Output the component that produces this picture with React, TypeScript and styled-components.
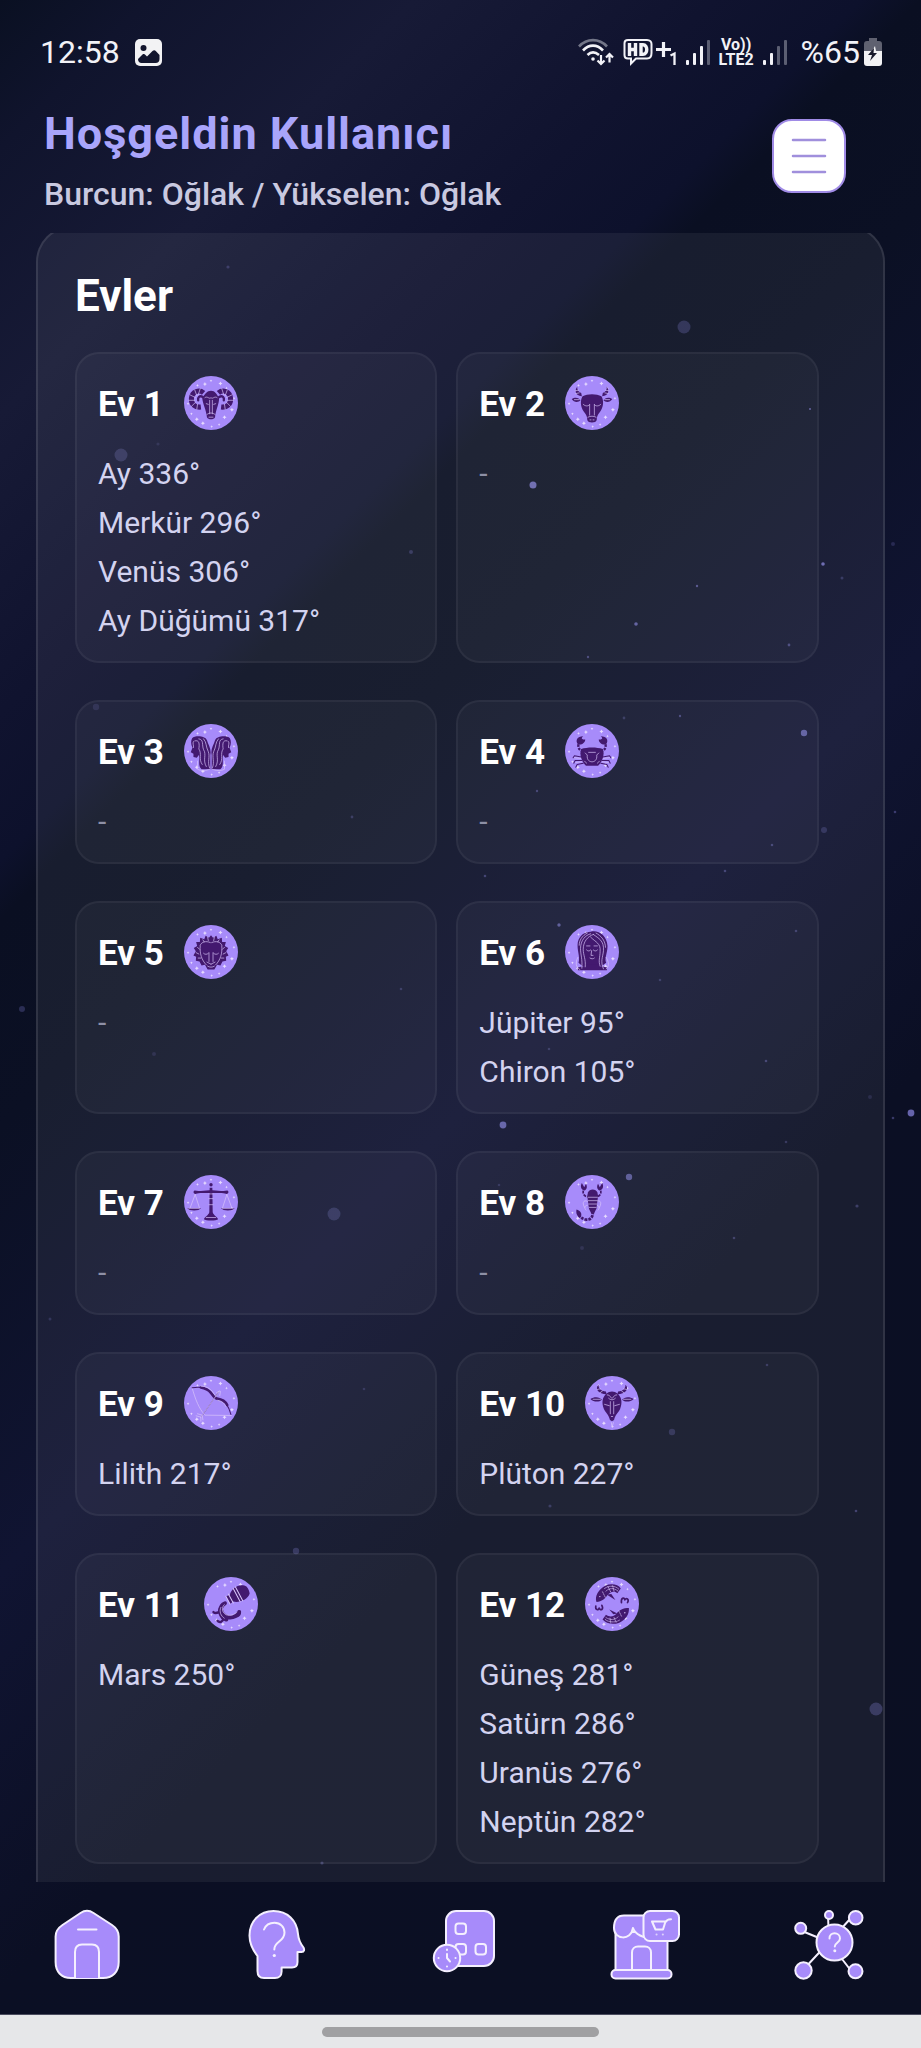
import React from "react";
import styled, { createGlobalStyle } from "styled-components";

const GlobalStyle = createGlobalStyle`
  *, *::before, *::after { box-sizing: border-box; }
  html, body { margin: 0; padding: 0; background: #0a0e20; }
  body { font-family: Roboto, "Noto Sans", sans-serif; color: #fff; }
  h1, h2, h3, p, ul { margin: 0; padding: 0; }
`;

const Page = styled.div`
  position: relative;
  display: flex;
  flex-direction: column;
  height: 100vh;
  overflow: hidden;
  background: linear-gradient(
    135deg,
    #0a1022 0%,
    #10142d 5%,
    #171a36 14%,
    #10132f 24%,
    #0d112c 29%,
    #0a0f22 31%,
    #0b1024 38%,
    #101432 53%,
    #0b0f24 67%,
    #0b0f22 100%
  );
`;

const Sky = styled.svg`
  position: absolute;
  inset: 0;
  width: 100%;
  height: 100%;
  pointer-events: none;
`;

const StatusBar = styled.div`
  position: relative;
  display: flex;
  align-items: center;
  justify-content: space-between;
  height: 104px;
  padding: 0 39px 0 40px;
  font-size: 32px;
  line-height: 40px;
  color: #f2f2f7;
`;

const StatusGroup = styled.div<{ $gap: number }>`
  display: flex;
  align-items: center;
  gap: ${(p) => p.$gap}px;
`;

const VoLte = styled.span`
  display: flex;
  flex-direction: column;
  align-items: center;
  font-size: 16px;
  line-height: 15px;
  font-weight: 700;
`;

const Battery = styled.span`
  display: flex;
  align-items: center;
  gap: 4px;
  padding-left: 5px;
`;

const Header = styled.header`
  position: relative;
  display: flex;
  align-items: flex-start;
  justify-content: space-between;
  height: 129px;
  padding: 2px 75px 0 44px;
`;

const Greeting = styled.h1`
  font-size: 45px;
  line-height: 56px;
  font-weight: 700;
  letter-spacing: 1px;
  color: #a9a5fb;
`;

const Signs = styled.p`
  margin-top: 12px;
  font-size: 32px;
  line-height: 40px;
  font-weight: 500;
  color: #c9c9e0;
`;

const MenuButton = styled.button`
  display: grid;
  place-items: center;
  width: 74px;
  height: 74px;
  margin-top: 13px;
  padding: 0;
  border: 2px solid #a08be6;
  border-radius: 20px;
  background: #fff;
`;

const Scroller = styled.main`
  position: relative;
  flex: 1;
  min-height: 0;
  overflow-y: auto;
  scrollbar-width: none;
  padding: 0 36px;
`;

const Panel = styled.section`
  margin-top: -7px;
  padding: 37px 37px 76px;
  border: 2px solid rgba(255, 255, 255, 0.1);
  border-radius: 36px;
  background: rgba(255, 255, 255, 0.06);
`;

const PanelTitle = styled.h2`
  font-size: 44px;
  line-height: 62px;
  font-weight: 700;
  margin-bottom: 25px;
`;

const HouseGrid = styled.div`
  display: grid;
  grid-template-columns: 47% 47%;
  gap: 37px 19px;
`;

const HouseCard = styled.article`
  padding: 22px 21px;
  border: 2px solid rgba(255, 255, 255, 0.05);
  border-radius: 24px;
  background: rgba(255, 255, 255, 0.03);
`;

const HouseHead = styled.div`
  display: flex;
  align-items: center;
  gap: 20px;
  height: 54px;
  margin-bottom: 26px;
`;

const HouseName = styled.h3`
  padding-top: 3px;
  font-size: 35px;
  line-height: 42px;
  font-weight: 700;
`;

const PlanetList = styled.ul`
  display: grid;
  gap: 13px;
  list-style: none;
  font-size: 30px;
  line-height: 36px;
  color: #d3d3f0;
`;

const Empty = styled.p`
  font-size: 30px;
  line-height: 36px;
  color: #8e90a6;
`;

const NavBar = styled.nav`
  position: relative;
  display: flex;
  justify-content: space-between;
  height: 132px;
  padding: 26px 55px 0 50px;
`;

const NavButton = styled.button`
  width: 74px;
  height: 74px;
  padding: 0;
  border: 0;
  background: none;
`;

const GestureBar = styled.div`
  position: relative;
  display: flex;
  justify-content: center;
  align-items: center;
  height: 34px;
  border-top: 1px solid #4a4c5e;
  background: #e6e7e9;
`;

const GestureHandle = styled.div`
  width: 30%;
  height: 10px;
  border-radius: 5px;
  background: #a0a0a2;
`;

/* x, y, radius, opacity */
const STARS: [number, number, number, number][] = [
  [684, 327, 6.5, 0.24], [121, 455, 6.5, 0.22], [533, 485, 3.5, 0.7], [810, 409, 1, 0.6],
  [823, 564, 1.8, 0.7], [842, 578, 1.5, 0.25], [697, 586, 1.2, 0.5], [636, 624, 1.8, 0.6],
  [789, 645, 1.4, 0.4], [588, 657, 1.2, 0.4], [893, 544, 2, 0.2], [411, 552, 2, 0.25],
  [804, 733, 3.2, 0.6], [96, 707, 3.2, 0.15], [680, 716, 1.2, 0.4], [624, 718, 1.4, 0.25],
  [537, 791, 1.2, 0.35], [352, 817, 1.4, 0.25], [824, 830, 3, 0.22], [895, 812, 1.3, 0.35],
  [772, 845, 1.3, 0.35], [725, 871, 1.3, 0.35], [485, 876, 1.3, 0.35], [559, 925, 1.7, 0.55],
  [796, 931, 1.3, 0.3], [660, 980, 1.3, 0.25], [401, 989, 1.3, 0.25], [22, 1009, 3, 0.25],
  [154, 1054, 2, 0.15], [549, 1049, 1.3, 0.25], [766, 1061, 1.3, 0.35], [503, 1125, 3.4, 0.65],
  [911, 1113, 3.4, 0.7], [893, 1118, 1.3, 0.35], [870, 1097, 2, 0.15], [786, 1142, 1.3, 0.25],
  [629, 1177, 3.2, 0.55], [334, 1214, 6.5, 0.22], [499, 1185, 1.3, 0.2], [857, 1206, 1.6, 0.3],
  [734, 1238, 1.3, 0.3], [582, 1248, 2, 0.15], [50, 1319, 1.5, 0.2], [767, 1365, 1.3, 0.25],
  [364, 1389, 1.3, 0.2], [672, 1432, 3.2, 0.22], [550, 1506, 1.6, 0.25], [856, 1511, 1.3, 0.35],
  [296, 1551, 3.2, 0.25], [876, 1709, 6.5, 0.28], [322, 1863, 1.6, 0.3], [228, 267, 1.6, 0.25],
  [158, 444, 1.6, 0.15],
];

const DARK = "#43196f";
const PALE = "#d9c6fb";

const dark = { fill: "none", stroke: DARK, strokeLinecap: "round" as const, strokeLinejoin: "round" as const };
const pale = { fill: "none", stroke: PALE, strokeWidth: 2, strokeLinecap: "round" as const };

const Mirror = ({ children }: { children: React.ReactNode }) => (
  <>
    {children}
    <g transform="translate(160 0) scale(-1 1)">{children}</g>
  </>
);

const SIGN_ART: Record<string, React.ReactNode> = {
  aries: (
    <>
      <Mirror>
        <path {...dark} strokeWidth={15} strokeLinecap="butt" d="M58 50C46 40 24 44 22 66C21 84 32 94 50 92" />
        <path {...dark} strokeWidth={7} d="M56 62C46 56 40 64 42 72" />
        <path {...pale} d="M48 38L42 56M32 42L38 58M18 56L34 64M14 72L32 72M22 90L34 78M38 98L40 84" />
      </Mirror>
      <path fill={DARK} d="M80 44C92 44 97 54 104 66C104 84 94 100 92 122C88 130 72 130 68 122C66 100 56 84 54 66C62 54 68 44 80 44Z" />
      <path {...pale} d="M62 64C70 58 74 70 80 64C86 70 90 58 98 64M76 72V112M84 72V112M66 82L72 84M94 82L88 84M68 114C76 108 84 108 92 114M74 122H86" />
    </>
  ),
  taurus: (
    <>
      <Mirror>
        <path fill={DARK} d="M36 32C28 44 30 58 50 60L48 50C40 48 36 42 36 32Z" />
        <path fill={DARK} d="M20 68C32 60 42 66 46 72C38 80 26 78 20 68Z" />
        <path {...pale} d="M30 44L40 42M32 52L42 50M28 70H42" />
      </Mirror>
      <path fill={DARK} d="M52 60C66 52 94 52 108 60C116 74 114 92 104 106C96 116 94 122 94 130C92 140 68 140 66 130C66 122 64 116 56 106C46 92 44 74 52 60Z" />
      <path {...pale} d="M54 84C60 90 68 90 72 86M106 84C100 90 92 90 88 86M73 84V116M87 84V116M68 122C76 118 84 118 92 122M74 130H77M83 130H86" />
    </>
  ),
  gemini: (
    <Mirror>
      <path fill={DARK} d="M24 42C32 34 62 34 68 48C72 62 82 74 78 92L78 134H52C40 122 48 108 44 92L38 100L28 98V88L20 84L25 70C20 60 20 50 24 42Z" />
      <path {...pale} d="M32 50C46 46 46 60 44 74C54 88 42 104 54 120M44 44C60 46 52 62 58 76C68 92 54 106 66 126M58 44C68 56 64 66 72 82C78 98 68 112 76 130" />
      <path {...pale} d="M28 52C24 58 30 62 28 70M40 110V134C52 140 66 138 76 134" />
    </Mirror>
  ),
  cancer: (
    <>
      <Mirror>
        <path fill={DARK} d="M38 60C30 48 36 36 54 36C46 42 50 46 60 46C60 56 48 64 38 60Z" />
        <path {...dark} strokeWidth={7} strokeDasharray="7 4" strokeLinecap="butt" d="M40 60C38 70 42 76 50 80" />
        <path {...dark} strokeWidth={3} d="M48 98L28 94L24 100M50 108L30 108L26 116M54 116L36 120L32 128" />
        <path {...pale} d="M48 102L28 100M50 112L32 114" />
      </Mirror>
      <path fill={DARK} d="M48 74C66 68 94 68 112 74C118 88 112 110 98 124H62C48 110 42 88 48 74Z" />
      <path {...pale} d="M60 86L66 92C64 108 74 112 80 112C86 112 96 108 94 92L100 86M70 84H90M58 110L64 116M102 110L96 116" />
    </>
  ),
  leo: (
    <>
      <path fill={DARK} d="M80 30L86 38L96 32L100 42L112 38L113 50L124 50L121 62L131 68L125 78L132 90L124 94L125 106L114 108L108 120L98 118L90 132H70L62 118L52 120L46 108L35 106L36 94L28 90L35 78L29 68L39 62L36 50L47 50L48 38L60 42L64 32L74 38Z" />
      <Mirror>
        <path {...pale} d="M48 60C52 50 64 46 78 52M48 62C46 84 52 104 66 118M40 66L46 72M36 82L44 86M42 98L50 98M56 44L60 50M70 36L72 46" />
        <path {...pale} d="M58 84C62 88 68 88 72 84M74 82V108M68 110L80 116" />
      </Mirror>
      <path {...pale} d="M70 122C76 126 84 126 90 122" />
    </>
  ),
  virgo: (
    <>
      <path fill={DARK} d="M76 20C98 14 124 30 126 62C126 84 116 98 122 112L108 122H52L40 112C46 92 34 74 38 50C44 30 58 20 76 20Z" />
      <path fill={DARK} d="M38 126C50 122 60 122 64 116H98C102 122 112 122 124 126V134H38Z" />
      <path {...pale} d="M76 26C60 30 46 46 46 70C46 88 52 100 50 128M84 28C66 34 54 50 54 72C54 90 62 100 60 124M84 28C100 40 116 46 114 76C112 96 104 108 114 130M76 36C92 52 106 54 104 78C104 96 98 106 104 122M92 24C108 32 120 48 120 66M66 24C50 32 42 46 42 60" />
      <path {...pale} d="M64 74C68 78 72 78 76 74M84 74C88 78 92 78 96 74M79 76L77 90H83M74 98C78 101 84 101 87 98M38 96C30 112 32 126 44 132M122 96C132 112 130 124 122 130M64 62H74M86 62H96" />
    </>
  ),
  libra: (
    <>
      <Mirror>
        <path fill={DARK} d="M80 45C60 44 46 50 32 46C26 48 28 56 34 56C46 51 60 54 80 53Z" />
        <path {...pale} d="M33 58L18 98M33 58L46 98" />
        <path fill={DARK} d="M10 98H50C46 108 14 108 10 98Z" />
        <path {...pale} d="M14 99H46" />
      </Mirror>
      <circle cx={80} cy={29} r={5} fill={DARK} />
      <path fill={DARK} d="M76 38H84L85 110C88 120 98 122 101 131C96 136 64 136 59 131C62 122 72 120 75 110Z" />
      <path {...pale} d="M74 56H86M74 70H86M74 88H86M66 126H94" />
    </>
  ),
  scorpio: (
    <>
      <Mirror>
        <path fill={DARK} d="M50 24C44 34 48 44 57 46C65 44 67 34 62 26L57 36Z" />
        <path {...dark} strokeWidth={5} strokeDasharray="9 3" strokeLinecap="butt" d="M54 46C52 60 60 64 72 66" />
        <path {...pale} d="M66 78C54 72 50 84 58 96M66 90C58 90 56 98 62 104" />
      </Mirror>
      <path fill={DARK} d="M68 52C72 40 92 40 96 52L98 62L93 100L86 114H78L71 100L66 62Z" />
      <path {...dark} strokeWidth={8} strokeDasharray="8 3" strokeLinecap="butt" d="M82 108C84 124 76 134 62 132C52 130 46 126 42 120" />
      <path fill={DARK} d="M34 102C46 106 52 114 46 126C36 124 32 114 34 102Z" />
      <path {...pale} d="M68 66H96M69 76H96M70 86H94M72 96H92" />
    </>
  ),
  sagittarius: (
    <>
      <path {...pale} d="M24 35C34 70 44 96 62 116L140 117" />
      <path {...dark} strokeWidth={3} d="M24 35C36 33 48 32 58 36M126 84C132 92 136 102 139 114" />
      <path {...dark} strokeWidth={8} d="M50 34C64 36 72 40 80 50C86 58 90 66 98 67C112 69 122 74 128 86" />
      <path {...pale} d="M50 30C66 30 76 36 84 46L94 60M100 72C112 74 120 80 124 90" />
      <path {...dark} strokeWidth={2} d="M102 48L52 120" />
      <path {...pale} d="M104 46L50 122M40 112L54 116L56 130M36 118L50 122L50 134M106 44L96 50M108 46L106 58" />
    </>
  ),
  capricorn: (
    <>
      <Mirror>
        <path fill={DARK} d="M40 26C28 38 40 54 64 54L62 46C48 44 40 38 40 26Z" />
        <path fill={DARK} d="M16 68C28 60 44 62 50 70C42 78 26 78 16 68Z" />
        <path {...pale} d="M36 40L46 38M44 50L52 44M24 69H46" />
      </Mirror>
      <path fill={DARK} d="M64 52C72 44 88 44 96 52C108 62 112 78 104 98C98 110 90 114 86 130L80 134L74 130C70 114 62 110 56 98C48 78 52 62 64 52Z" />
      <path {...pale} d="M66 56C76 56 76 66 80 66C84 66 84 56 94 56M58 84L72 88M102 84L88 88M75 76V112M85 76V112M70 66C76 72 84 72 90 66M78 120H82" />
      <path {...pale} d="M78 138L80 152L84 138" />
    </>
  ),
  aquarius: (
    <>
      <g transform="rotate(-28 104 50)">
        <path fill={DARK} d="M78 40C92 24 122 22 134 42C136 52 134 58 132 64C118 78 92 74 78 62L66 64V38Z" />
        <path {...pale} strokeWidth={3} d="M76 36V66M96 28V72M104 27V73M66 38V64" />
      </g>
      <path {...dark} strokeWidth={12} d="M62 78C46 84 46 104 62 116C78 124 94 120 104 104M54 86C42 96 48 120 66 126" />
      <path {...dark} strokeWidth={7} d="M50 100C42 106 34 110 28 104M58 122C56 134 46 136 40 130M90 114C98 120 108 112 106 102" />
      <path {...pale} d="M60 82C50 92 54 106 66 112C78 116 90 112 98 104M50 90C44 102 50 116 60 122" />
    </>
  ),
  pisces: (
    <>
      <path fill={DARK} d="M34 74C28 58 40 36 60 26C78 18 98 22 106 34L96 48C84 40 76 44 66 54C60 64 50 72 34 74Z" />
      <path {...pale} strokeDasharray="4 3" d="M58 34C72 24 90 26 100 36M62 42C72 32 86 32 98 42M52 44L60 60M68 28L76 44M82 26L86 42" />
      <circle cx={44} cy={58} r={2} fill={PALE} />
      <path fill={DARK} d="M64 52L90 68L78 50Z" />
      <path fill={DARK} d="M130 92C132 110 120 128 100 136C82 142 62 138 52 126L62 112C74 120 84 118 94 108C100 98 114 92 130 92Z" />
      <path {...pale} strokeDasharray="4 3" d="M102 128C88 136 70 134 60 126M98 118C88 128 74 128 62 120M108 116L100 100M86 120L92 134M74 122L76 136" />
      <circle cx={118} cy={106} r={2} fill={PALE} />
      <path fill={DARK} d="M96 108L72 96L84 110Z" />
      <path {...dark} strokeWidth={5} d="M108 76C106 62 116 58 118 68C122 60 132 66 126 76M32 86C30 98 40 100 42 92C46 102 56 96 50 84" />
    </>
  ),
};

const GLYPH_STARS: [number, number, number][] = [
  [40, 28, 2], [62, 24, 3], [108, 22, 3], [126, 36, 2], [22, 112, 2], [38, 128, 3], [120, 122, 3],
  [142, 100, 3], [104, 144, 2], [56, 140, 3], [12, 82, 2], [148, 66, 2], [80, 14, 2], [82, 150, 2],
];

const SignBadge = ({ sign, label }: { sign: string; label: string }) => (
  <svg width={54} height={54} viewBox="0 0 160 160" role="img" aria-label={label}>
    <circle cx={80} cy={80} r={80} fill="#a78bfa" />
    {GLYPH_STARS.map(([x, y, r]) => (
      <path
        key={`${x}-${y}`}
        fill="#e6dafe"
        d={`M${x} ${y - r * 2}L${x + r * 0.7} ${y - r * 0.7}L${x + r * 2} ${y}L${x + r * 0.7} ${y + r * 0.7}L${x} ${y + r * 2}L${x - r * 0.7} ${y + r * 0.7}L${x - r * 2} ${y}L${x - r * 0.7} ${y - r * 0.7}Z`}
      />
    ))}
    {SIGN_ART[sign]}
  </svg>
);

type House = { sign: string; label: string; planets: string[] };

const HOUSES: House[] = [
  { sign: "aries", label: "Koç", planets: ["Ay 336°", "Merkür 296°", "Venüs 306°", "Ay Düğümü 317°"] },
  { sign: "taurus", label: "Boğa", planets: [] },
  { sign: "gemini", label: "İkizler", planets: [] },
  { sign: "cancer", label: "Yengeç", planets: [] },
  { sign: "leo", label: "Aslan", planets: [] },
  { sign: "virgo", label: "Başak", planets: ["Jüpiter 95°", "Chiron 105°"] },
  { sign: "libra", label: "Terazi", planets: [] },
  { sign: "scorpio", label: "Akrep", planets: [] },
  { sign: "sagittarius", label: "Yay", planets: ["Lilith 217°"] },
  { sign: "capricorn", label: "Oğlak", planets: ["Plüton 227°"] },
  { sign: "aquarius", label: "Kova", planets: ["Mars 250°"] },
  { sign: "pisces", label: "Balık", planets: ["Güneş 281°", "Satürn 286°", "Uranüs 276°", "Neptün 282°"] },
];

const line = {
  fill: "#a78bfa",
  stroke: "#f4effe",
  strokeWidth: 2,
  strokeLinecap: "round" as const,
  strokeLinejoin: "round" as const,
};

const HomeIcon = () => (
  <svg width={74} height={74} viewBox="0 0 74 74" aria-hidden="true">
    <path {...line} d="M30.500 5C34.500 2.300 39.500 2.300 43.500 5L62 17C66.500 20 68.700 23.500 68.700 28.500V54C68.700 64 62.500 70 53 70H21C11.500 70 5.600 64 5.600 54V28.500C5.600 23.500 8 20 12.500 17Z" />
    <path {...line} d="M28 21.500H46.500M25 70V44C25 39 28 36.500 32 36.500H42C46.500 36.500 49 39 49 44V70" />
  </svg>
);

const HeadIcon = () => (
  <svg width={74} height={74} viewBox="0 0 74 74" aria-hidden="true">
    <path {...line} d="M37.500 3C23.500 3 13.500 13.500 13.500 27.500C13.500 35.500 16 41 21.500 48V63C21.500 67.500 24 70 28 70H39C43 70 45.600 67.500 45.600 63.500V59.500H56C59.500 59.500 61.500 57.500 61.500 54V44H65.500C68.500 44 68.500 41.500 67.500 39.500C64 35 62.500 32 62 26C61 12.500 51.500 3 37.500 3Z" />
    <path {...line} fill="none" d="M28 21.500C30 16.500 34 14.800 38.500 14.800C44.500 14.800 48.500 19 48.500 24.500C48.500 34 38.300 33 38.300 41.500" />
    <circle cx={38.300} cy={47.500} r={1.600} fill="#f4effe" />
  </svg>
);

const PlannerIcon = () => (
  <svg width={74} height={74} viewBox="0 0 74 74" aria-hidden="true">
    <rect {...line} x={25} y={3} width={48} height={55} rx={10} />
    <rect {...line} x={34.500} y={15.500} width={10.500} height={10.500} rx={3} />
    <rect {...line} x={34.500} y={36} width={10.500} height={10.500} rx={3} />
    <rect {...line} x={54.500} y={36} width={10.500} height={10.500} rx={3} />
    <circle {...line} cx={26} cy={50} r={13.200} />
    <path {...line} fill="none" d="M26 46V50L29 53.500" />
    <path {...line} fill="none" strokeWidth={2} d="M26 41.500V42M26 58.500V58.600M17.500 50H17.600M34.500 50H34.600" />
  </svg>
);

const ShopIcon = () => (
  <svg width={74} height={74} viewBox="0 0 74 74" aria-hidden="true">
    <path {...line} d="M8.500 24H60.500V62H8.500Z" />
    <path {...line} d="M7 20C7 12 10 7.500 17 7.500H38L44 29C37 31 28 26 26 20C24 33 7 32 7 20Z" />
    <path {...line} fill="none" d="M25 62V44.500C25 41 27.500 38.500 31 38.500H38C41.500 38.500 44 41 44 44.500V62" />
    <rect {...line} x={4.500} y={62} width={60} height={8.500} rx={4} />
    <rect {...line} x={36.500} y={3} width={35.500} height={30} rx={6.500} />
    <path {...line} fill="none" d="M45 13.500H58.500L56 21.500H48.500ZM58.500 14L60.500 12C61.500 11.300 62.500 11.300 64 11.300" />
    <path {...line} fill="none" strokeOpacity={0.7} d="M49.500 26.500H49.600M55.800 26.500H55.900" />
  </svg>
);

const NetworkIcon = () => (
  <svg width={74} height={74} viewBox="0 0 74 74" aria-hidden="true">
    <path {...line} fill="none" d="M37 34L5 21M37 34L36 7M37 34L59 10M37 34L11 62M37 34L60 64" />
    <circle {...line} cx={42.500} cy={34.500} r={18} />
    <circle {...line} cx={8.700} cy={20.300} r={5.500} />
    <circle {...line} cx={37} cy={7} r={4} />
    <circle {...line} cx={63.700} cy={9.700} r={6.800} />
    <circle {...line} cx={11.500} cy={62.500} r={8.200} />
    <circle {...line} cx={63.500} cy={63.300} r={7} />
    <path {...line} fill="none" d="M37.500 30.500C37.500 27 40 25.300 42.500 25.300C45.500 25.300 48 27.500 48 30.500C48 35 42.800 34.500 42.800 38.500" />
    <circle cx={42.800} cy={42.800} r={1.500} fill="#f4effe" />
  </svg>
);

const NAV = [
  { label: "Ana sayfa", Icon: HomeIcon },
  { label: "Yorum", Icon: HeadIcon },
  { label: "Takvim", Icon: PlannerIcon },
  { label: "Mağaza", Icon: ShopIcon },
  { label: "Keşfet", Icon: NetworkIcon },
];

const PhotoIcon = () => (
  <svg width={27} height={27} viewBox="0 0 27 27" aria-hidden="true">
    <rect width={27} height={27} rx={5} fill="#f2f2f4" />
    <circle cx={8.500} cy={9} r={3} fill="#12152d" />
    <path fill="#12152d" d="M3 20L7.500 15.500C8.500 14.800 9.500 14.800 10.500 16L12 17.500L17.500 12C18.800 11 20 11.200 21 12.200L24.500 16V20C24.500 22.500 23 24 20.500 24H6.500C4.500 24 3 22.500 3 20Z" />
  </svg>
);

const WifiIcon = () => (
  <svg width={36} height={28} viewBox="0 0 36 28" fill="none" stroke="#f2f2f7" strokeWidth={2.600} aria-hidden="true">
    <path stroke="#737688" d="M1 8.500C9 0 21 0 29 8.500" />
    <path d="M5 12.500C11 6 19 6 25 12.500M9.500 17C13 13.500 17 13.500 21 17" />
    <circle cx={15} cy={21} r={1.800} fill="#f2f2f7" stroke="none" />
    <path strokeWidth={2.200} d="M23 17V26M19.500 22.500L23 26L26.500 22.500M31.500 24.500V16M28 19.500L31.500 16L35 19.500" />
  </svg>
);

const HdIcon = () => (
  <svg width={54} height={28} viewBox="0 0 54 28" fill="none" stroke="#f2f2f7" aria-hidden="true">
    <path strokeWidth={2} d="M5 2H24C27 2 28.500 4 28.500 6V15C28.500 18 27 20.500 24 20.500H13L8 25.500V20.500H5C3 20.500 1.500 19 1.500 17V5C1.500 3 3 2 5 2Z" />
    <path strokeWidth={3.400} d="M6.500 5V18M12.500 5V18M6.500 11.500H12.500M18 6.700V16.300H20C25 16.300 25 6.700 20 6.700Z" />
    <path strokeWidth={3.200} d="M33 11.500H48M40.500 4V19" />
    <path strokeWidth={2.300} d="M47.500 17.500L51.500 15.500V27" />
  </svg>
);

const SignalIcon = ({ level }: { level: number }) => (
  <svg width={24} height={26} viewBox="0 0 24 26" aria-hidden="true">
    {[5, 12, 19, 25].map((h, i) => (
      <rect key={h} x={i * 7} y={26 - h} width={3} height={h} rx={1} fill={i < level ? "#f2f2f7" : "#5b5e72"} />
    ))}
  </svg>
);

const BatteryIcon = () => (
  <svg width={18} height={28} viewBox="0 0 18 28" aria-hidden="true">
    <path fill="#5f6170" d="M5 0H13V3H15C17 3 18 4 18 6V14H0V6C0 4 1 3 3 3H5Z" />
    <path fill="#f2f2f4" d="M0 13H18V25C18 27 17 28 15 28H3C1 28 0 27 0 25Z" />
    <path fill="#f2f2f4" d="M11 8L8 13H12Z" />
    <path fill="#17182a" d="M10 10L4 17H8L6 23L13 15H9.500Z" />
  </svg>
);

export default function App() {
  return (
    <>
      <GlobalStyle />
      <Page>
        <Sky viewBox="0 0 921 2048" preserveAspectRatio="xMidYMin slice" aria-hidden="true">
          {STARS.map(([x, y, r, o]) => (
            <circle key={`${x}-${y}`} cx={x} cy={y} r={r} fill="#8b87e6" opacity={o} />
          ))}
        </Sky>

        <StatusBar>
          <StatusGroup $gap={15}>
            <span>12:58</span>
            <PhotoIcon />
          </StatusGroup>
          <StatusGroup $gap={9}>
            <WifiIcon />
            <HdIcon />
            <SignalIcon level={3} />
            <VoLte>
              <span>Vo))</span>
              <span>LTE2</span>
            </VoLte>
            <SignalIcon level={2} />
            <Battery>
              <span>%65</span>
              <BatteryIcon />
            </Battery>
          </StatusGroup>
        </StatusBar>

        <Header>
          <div>
            <Greeting>Hoşgeldin Kullanıcı</Greeting>
            <Signs>Burcun: Oğlak / Yükselen: Oğlak</Signs>
          </div>
          <MenuButton type="button" aria-label="Menü">
            <svg width={36} height={36} viewBox="0 0 36 36" aria-hidden="true">
              <path stroke="#a08fdc" strokeWidth={2.500} strokeLinecap="round" d="M2 2H34M2 18H34M2 34H34" />
            </svg>
          </MenuButton>
        </Header>

        <Scroller>
          <Panel>
            <PanelTitle>Evler</PanelTitle>
            <HouseGrid>
              {HOUSES.map(({ sign, label, planets }, i) => (
                <HouseCard key={sign}>
                  <HouseHead>
                    <HouseName>Ev {i + 1}</HouseName>
                    <SignBadge sign={sign} label={label} />
                  </HouseHead>
                  {planets.length ? (
                    <PlanetList>
                      {planets.map((planet) => (
                        <li key={planet}>{planet}</li>
                      ))}
                    </PlanetList>
                  ) : (
                    <Empty>-</Empty>
                  )}
                </HouseCard>
              ))}
            </HouseGrid>
          </Panel>
        </Scroller>

        <NavBar>
          {NAV.map(({ label, Icon }) => (
            <NavButton key={label} type="button" aria-label={label}>
              <Icon />
            </NavButton>
          ))}
        </NavBar>
        <GestureBar>
          <GestureHandle />
        </GestureBar>
      </Page>
    </>
  );
}
